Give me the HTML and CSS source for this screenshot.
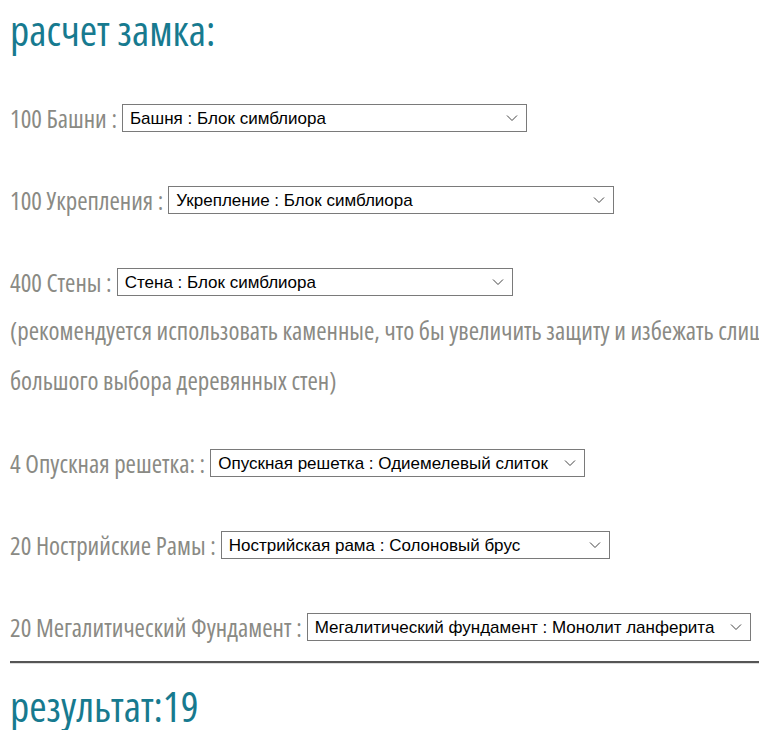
FILE: index.html
```html
<!DOCTYPE html>
<html lang="ru">
  <head>
    <meta charset="UTF-8" />
    <title>Расчет замка</title>
    <link rel="stylesheet" href="styles.css">
  </head>
  <body>
    <div class="calc">
      <h1 class="title">расчет замка:</h1>

      <div class="row">
        <span class="label">100 Башни :</span>
        <select class="pick pick-tower">
          <option>Башня : Блок симблиора</option>
        </select>
      </div>

      <div class="row">
        <span class="label">100 Укрепления :</span>
        <select class="pick pick-fort">
          <option>Укрепление : Блок симблиора</option>
        </select>
      </div>

      <div class="row">
        <span class="label">400 Стены :</span>
        <select class="pick pick-wall">
          <option>Стена : Блок симблиора</option>
        </select>
      </div>
      <p class="note">(рекомендуется использовать каменные, что бы увеличить защиту и избежать слишком большого выбора деревянных стен)</p>

      <div class="row row-after-note">
        <span class="label">4 Опускная решетка: :</span>
        <select class="pick pick-gate">
          <option>Опускная решетка : Одиемелевый слиток</option>
        </select>
      </div>

      <div class="row">
        <span class="label">20 Нострийские Рамы :</span>
        <select class="pick pick-frame">
          <option>Нострийская рама : Солоновый брус</option>
        </select>
      </div>

      <div class="row">
        <span class="label">20 Мегалитический Фундамент :</span>
        <select class="pick pick-base">
          <option>Мегалитический фундамент : Монолит ланферита</option>
        </select>
      </div>

      <hr class="sep">
      <h2 class="title result">результат:19</h2>
    </div>
  </body>
</html>
```

FILE: styles.css
```css
* {
  margin: 0;
  padding: 0;
  box-sizing: border-box;
}

body {
  overflow: hidden;
  background: #fff;
}

.calc {
  width: 840px;
  padding-left: 10px;
  font-family: "Open Sans", "Noto Sans", sans-serif;
  font-stretch: 75%;
}

.title {
  font-size: 42px;
  line-height: 48px;
  font-weight: normal;
  color: #177a8f;
  margin-top: 6px;
}

.row {
  display: flex;
  align-items: center;
  gap: 5px;
  height: 28px;
  margin-top: 54px;
}

.row:first-of-type {
  margin-top: 50px;
}

.row-after-note {
  margin-top: 44px;
}

.label {
  font-size: 25px;
  color: #8a8a84;
  white-space: nowrap;
}

.note {
  font-size: 25px;
  line-height: 50px;
  color: #8a8a84;
  margin-top: 9px;
}

.pick {
  appearance: none;
  height: 28px;
  padding: 0 30px 0 7px;
  border: 1px solid #7a7a7a;
  border-radius: 0;
  background: #fff url("data:image/svg+xml,%3Csvg xmlns='http://www.w3.org/2000/svg' width='12' height='8'%3E%3Cpath d='M1 1.5l5 5 5-5' fill='none' stroke='%23444' stroke-width='1'/%3E%3C/svg%3E") no-repeat right 8px center;
  font-family: "Liberation Sans", sans-serif;
  font-stretch: normal;
  font-size: 17px;
  color: #000;
}

.pick-tower { width: 405px; }
.pick-fort { width: 446px; }
.pick-wall { width: 396px; }
.pick-gate { width: 375px; }
.pick-frame { width: 389px; }
.pick-base { width: 444px; }

.sep {
  border: none;
  border-top: 2px solid #555;
  border-bottom: 1px solid #ddd;
  margin-top: 20px;
}

.result {
  margin-top: 18px;
}
```
